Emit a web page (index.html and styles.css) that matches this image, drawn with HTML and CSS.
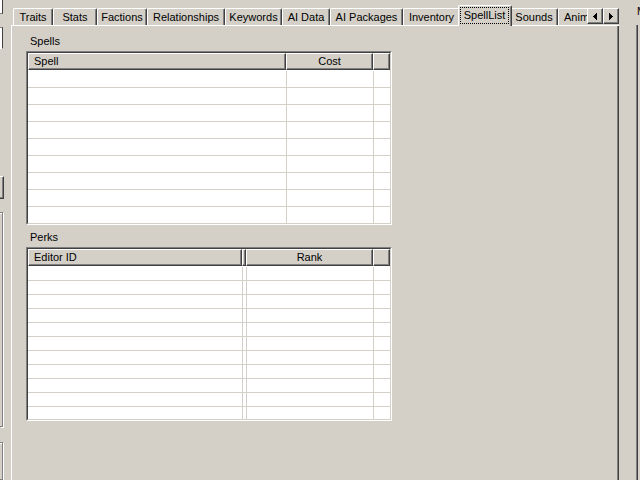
FILE: index.html
```html
<!DOCTYPE html>
<html>
<head>
<meta charset="utf-8">
<title>SpellList</title>
<link rel="stylesheet" href="styles.css">
</head>
<body>
<div class="window">

  <!-- edges of the controls of the left panel -->
  <div class="side-left">
    <div class="l-box l-a"></div>
    <div class="l-box l-b"></div>
    <div class="l-btn"></div>
    <div class="l-group"></div>
    <div class="l-group l-group2"></div>
  </div>

  <div class="tabctl">
    <div class="tabrow">
      <div class="tabstrip">
        <div class="tab t-traits">Traits</div>
        <div class="tab t-stats">Stats</div>
        <div class="tab t-factions">Factions</div>
        <div class="tab t-relations">Relationships</div>
        <div class="tab t-keywords">Keywords</div>
        <div class="tab t-aidata">AI Data</div>
        <div class="tab t-aipack">AI Packages</div>
        <div class="tab t-inventory">Inventory</div>
        <div class="tab sel t-spells"><span class="focus">SpellList</span></div>
        <div class="tab t-sounds">Sounds</div>
        <div class="tab t-anim">Animation</div>
      </div>
      <div class="arrows">
        <div class="arrow"><svg width="4" height="7" viewBox="0 0 4 7" shape-rendering="crispEdges"><polygon points="4,0 4,7 0,3.5" fill="#000"/></svg></div>
        <div class="arrow"><svg width="4" height="7" viewBox="0 0 4 7" shape-rendering="crispEdges"><polygon points="0,0 0,7 4,3.5" fill="#000"/></svg></div>
      </div>
    </div>

    <div class="tabpage">
      <div class="label">Spells</div>
      <div class="listview spells">
        <div class="lv-in">
          <div class="lv-head">
            <div class="hcell h-spell">Spell</div>
            <div class="hcell center h-cost">Cost</div>
            <div class="hcell fill"></div>
          </div>
          <div class="lv-body">
            <div class="row"><div class="cell c-spell"></div><div class="cell c-cost"></div></div>
            <div class="row"><div class="cell c-spell"></div><div class="cell c-cost"></div></div>
            <div class="row"><div class="cell c-spell"></div><div class="cell c-cost"></div></div>
            <div class="row"><div class="cell c-spell"></div><div class="cell c-cost"></div></div>
            <div class="row"><div class="cell c-spell"></div><div class="cell c-cost"></div></div>
            <div class="row"><div class="cell c-spell"></div><div class="cell c-cost"></div></div>
            <div class="row"><div class="cell c-spell"></div><div class="cell c-cost"></div></div>
            <div class="row"><div class="cell c-spell"></div><div class="cell c-cost"></div></div>
            <div class="row"><div class="cell c-spell"></div><div class="cell c-cost"></div></div>
          </div>
        </div>
      </div>

      <div class="label perks-label">Perks</div>
      <div class="listview perks">
        <div class="lv-in">
          <div class="lv-head">
            <div class="hcell h-editor">Editor ID</div>
            <div class="hcell h-narrow"></div>
            <div class="hcell center h-rank">Rank</div>
            <div class="hcell fill"></div>
          </div>
          <div class="lv-body">
            <div class="row"><div class="cell c-editor"></div><div class="cell c-narrow"></div><div class="cell c-rank"></div></div>
            <div class="row"><div class="cell c-editor"></div><div class="cell c-narrow"></div><div class="cell c-rank"></div></div>
            <div class="row"><div class="cell c-editor"></div><div class="cell c-narrow"></div><div class="cell c-rank"></div></div>
            <div class="row"><div class="cell c-editor"></div><div class="cell c-narrow"></div><div class="cell c-rank"></div></div>
            <div class="row"><div class="cell c-editor"></div><div class="cell c-narrow"></div><div class="cell c-rank"></div></div>
            <div class="row"><div class="cell c-editor"></div><div class="cell c-narrow"></div><div class="cell c-rank"></div></div>
            <div class="row"><div class="cell c-editor"></div><div class="cell c-narrow"></div><div class="cell c-rank"></div></div>
            <div class="row"><div class="cell c-editor"></div><div class="cell c-narrow"></div><div class="cell c-rank"></div></div>
            <div class="row"><div class="cell c-editor"></div><div class="cell c-narrow"></div><div class="cell c-rank"></div></div>
            <div class="row"><div class="cell c-editor"></div><div class="cell c-narrow"></div><div class="cell c-rank"></div></div>
            <div class="row"><div class="cell c-editor"></div><div class="cell c-narrow"></div><div class="cell c-rank"></div></div>
          </div>
        </div>
      </div>
    </div>
  </div>

  <!-- edge of the next panel on the right -->
  <div class="side-right">
    <div class="r-label">Model</div>
    <div class="r-box"></div>
  </div>

</div>
</body>
</html>
```

FILE: styles.css
```css
* { box-sizing: border-box; }
body { margin: 0; background: #d4d0c8; font: 11px "Liberation Sans", Arial, sans-serif; color: #000; overflow: hidden; }

.window { display: flex; width: 640px; height: 480px; overflow: hidden; }

/* left panel remains */
.side-left { width: 11px; flex-shrink: 0; display: flex; flex-direction: column; }
.l-box { width: 3px; background: #fff; border-right: 1px solid #404040; }
.l-a { height: 15px; border-bottom: 1px solid #808080; }
.l-b { height: 22px; margin-top: 13px; border-top: 1px solid #808080; border-bottom: 1px solid #fff; }
.l-btn { width: 4px; height: 24px; margin-top: 127px; border-top: 1px solid #fff; border-right: 1px solid #404040; border-bottom: 1px solid #404040; box-shadow: inset -1px -1px #808080; }
.l-group { width: 3px; height: 224px; margin-top: 13px; border: 1px solid #808080; border-left: 0; box-shadow: 1px 1px #fff, inset 0 1px #fff; }
.l-group2 { height: 40px; margin-top: 15px; }

/* tab control */
.tabctl { width: 608px; flex-shrink: 0; display: flex; flex-direction: column; }
.tabrow { display: flex; height: 26px; flex-shrink: 0; }
.tabstrip { flex: 1; min-width: 0; display: flex; align-items: flex-end; overflow: hidden; padding-left: 2px; box-shadow: inset 0 -1px #fff; }

.tab { flex-shrink: 0; height: 17px; margin-bottom: 1px; border: 1px solid #fff; border-bottom: 0; border-right-color: #404040; border-radius: 2px 2px 0 0; box-shadow: inset -1px 0 #808080; text-align: center; line-height: 16px; white-space: nowrap; overflow: hidden; }
.tab.sel { height: 21px; margin: 0 -2px; position: relative; z-index: 1; background: #d4d0c8; padding: 1px 2px 0 1px; line-height: 13px; }
.focus { display: block; height: 17px; border: 1px dotted #000; padding-top: 1px; }

.t-traits { width: 40px; }
.t-stats { width: 44px; }
.t-factions { width: 50px; }
.t-relations { width: 78px; }
.t-keywords { width: 57px; }
.t-aidata { width: 48px; }
.t-aipack { width: 73px; }
.t-inventory { width: 57px; }
.t-spells { width: 54px; }
.t-sounds { width: 48px; }
.t-anim { width: 66px; text-align: left; padding-left: 5px; }

.arrows { display: flex; width: 32px; flex-shrink: 0; padding-top: 8px; box-shadow: inset 0 -1px #fff; }
.arrow { width: 16px; height: 16px; border: 1px solid; border-color: #fff #404040 #404040 #fff; box-shadow: inset -1px -1px #808080; display: flex; align-items: center; justify-content: center; }
.arrow svg { display: block; }

.tabpage { flex: 1; border-left: 1px solid #fff; border-right: 1px solid #404040; box-shadow: inset -1px 0 #808080; padding: 9px 0 0 14px; }

.label { padding-left: 4px; height: 13px; line-height: 13px; }
.perks-label { margin-top: 6px; }

/* list views */
.listview { width: 366px; height: 174px; margin-top: 3px; border: 1px solid; border-color: #808080 #fff #fff #808080; }
.lv-in { height: 100%; border: 1px solid; border-color: #404040 #d4d0c8 #d4d0c8 #404040; background: #fff; overflow: hidden; }
.lv-head { display: flex; height: 17px; }
.hcell { flex-shrink: 0; height: 17px; border: 1px solid; border-color: #fff #404040 #404040 #fff; box-shadow: inset -1px -1px #808080; background: #d4d0c8; padding-left: 5px; line-height: 14px; white-space: nowrap; overflow: hidden; }
.hcell.center { text-align: center; padding-left: 0; }
.hcell.fill { flex: 1; }

.lv-body { padding-top: 1px; }
.row { display: flex; height: 17px; border-bottom: 1px solid #d4d0c8; }
.perks .row { height: 14px; }
.cell { flex-shrink: 0; height: 100%; border-right: 1px solid #d4d0c8; }

.h-spell { width: 258px; }
.h-cost { width: 87px; }
.c-spell { width: 259px; }
.c-cost { width: 87px; }

.h-editor { width: 214px; }
.h-narrow { width: 4px; padding: 0; }
.h-rank { width: 127px; }
.c-editor { width: 215px; }
.c-narrow { width: 4px; }
.c-rank { width: 127px; }

/* right panel remains */
.side-right { flex: 1; min-width: 0; overflow: hidden; padding-top: 5px; display: flex; flex-direction: column; }
.r-label { padding-left: 18px; height: 13px; line-height: 13px; white-space: nowrap; }
.r-box { flex: 1; margin-left: 17px; margin-top: 7px; border-left: 1px solid #808080; box-shadow: inset 1px 0 #404040; }
```
